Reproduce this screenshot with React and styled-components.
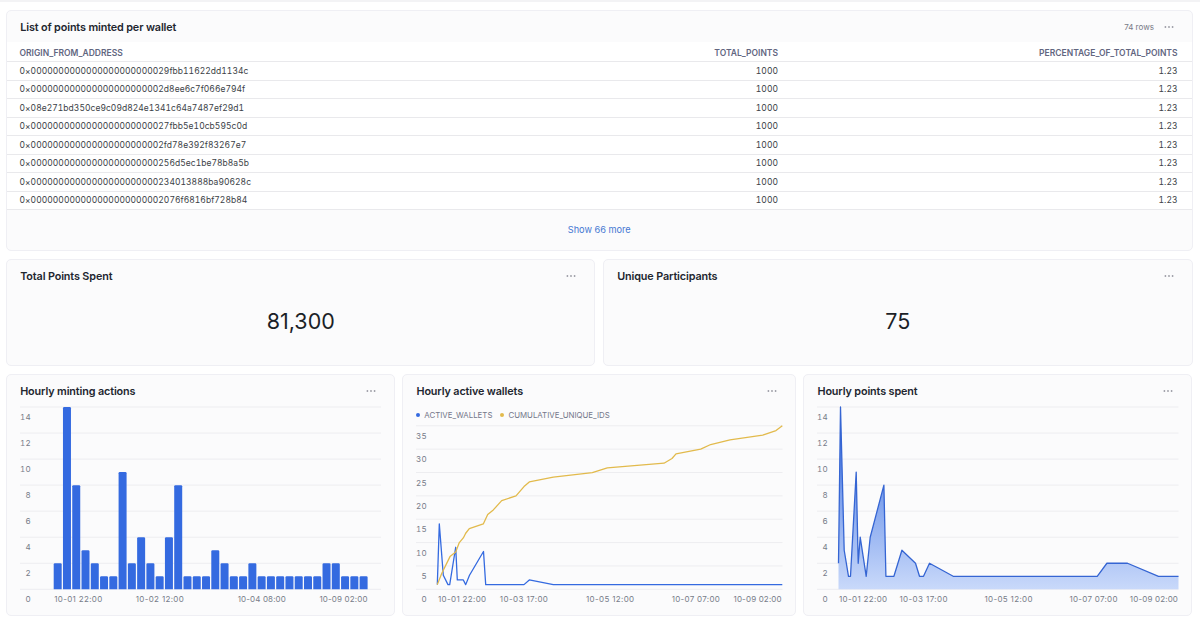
import styled, { createGlobalStyle } from 'styled-components';

const GlobalStyle = createGlobalStyle`
	* {
		box-sizing: border-box;
	}

	body {
		margin: 0;
		background: #fff;
		font-family: Inter, 'Liberation Sans', sans-serif;
		-webkit-font-smoothing: antialiased;
	}
`;

const BLUE = '#346ae0';
const YELLOW = '#e2ba4c';

const wallets = [
	'0×0000000000000000000000029fbb11622dd1134c',
	'0×000000000000000000000002d8ee6c7f066e794f',
	'0×08e271bd350ce9c09d824e1341c64a7487ef29d1',
	'0×0000000000000000000000027fbb5e10cb595c0d',
	'0×000000000000000000000002fd78e392f83267e7',
	'0×00000000000000000000000256d5ec1be78b8a5b',
	'0×00000000000000000000000234013888ba90628c',
	'0×000000000000000000000002076f6816bf728b84',
];

const mintingActions = [
	2, 14, 8, 3, 2, 1, 1, 9, 2, 4, 2, 1, 4, 8, 1, 1, 1, 3, 2, 1, 1, 2, 1, 1, 1, 1, 1, 1,
	1, 2, 2, 1, 1, 1,
];

// [x, value]
const activeWallets = [
	[34.3, 1], [36.3, 14], [40.3, 3], [45, 1], [46.7, 1], [52.7, 9], [54.3, 2],
	[60.3, 2], [62.7, 1], [66.5, 3], [80.5, 8.1], [82.7, 1], [121, 1], [126.3, 2],
	[150.3, 1], [379.3, 1],
];

const cumulativeIds = [
	[34.3, 1], [38.7, 3.4], [47, 7], [52.7, 8], [56.3, 10], [60.3, 11], [62.7, 12],
	[66.3, 13], [80.3, 14], [84.7, 16], [90.3, 17], [98.7, 19], [113, 20], [121, 22],
	[126.3, 23], [150.3, 24], [189.3, 25], [204.3, 26], [261, 27], [269, 28],
	[273, 29], [297.7, 30], [307.7, 31], [327, 32], [359.7, 33], [373, 34],
	[379.3, 35],
];

const pointsSpent = [
	[34.5, 2], [36.5, 14], [40.2, 3], [44.5, 1], [46.5, 1], [52.2, 9], [54.2, 2],
	[56.2, 4], [62.2, 1], [66.2, 4], [79.9, 8], [81.9, 1], [89.9, 1], [97.9, 3],
	[111.5, 2], [115.5, 1], [119.5, 1], [125.5, 2], [149.2, 1], [293.2, 1],
	[302.9, 2], [323.5, 2], [354.5, 1], [374.5, 1],
];

const Page = styled.main`
	display: flex;
	flex-direction: column;
	gap: 8px;
	width: 1200px;
	height: 625px;
	padding: 8px 7.5px 0 6px;
	border-top: 2px solid #f3f3f5;
	overflow: hidden;
`;

const Row = styled.div`
	display: grid;
	grid-template-columns: ${({ $columns }) => $columns};
	gap: 7.6px;
	height: ${({ $height }) => $height}px;
`;

const CardBox = styled.section`
	display: flex;
	flex-direction: column;
	min-width: 0;
	height: ${({ $height }) => ($height ? `${$height}px` : '100%')};
	border: 1px solid #efeff4;
	border-radius: 5px;
	background: #fbfbfc;
	overflow: hidden;
`;

const CardHeader = styled.header`
	display: flex;
	align-items: center;
	flex: none;
	height: ${({ $height }) => $height || 31}px;
	padding: 0 18px 0 13.2px;
`;

const Title = styled.h2`
	flex: 1;
	margin: 0;
	padding-top: ${({ $shift }) => $shift}px;
	color: #22262f;
	font-size: 10.8px;
	font-weight: 600;
	letter-spacing: -0.12px;
	line-height: 14px;
`;

const RowCount = styled.span`
	margin-right: 9.6px;
	color: #777986;
	font-size: 8px;
`;

const Dots = styled.svg`
	display: block;
	width: 10px;
	height: 4px;
	fill: #9b9ca5;
`;

const Table = styled.table`
	width: 100%;
	border-collapse: collapse;
	table-layout: fixed;
	background: #fff;
`;

const HeadCell = styled.th`
	width: ${({ $width }) => $width};
	height: 19.5px;
	padding: 2px 14px 0 12.5px;
	color: #62667f;
	font-size: 8.5px;
	font-weight: 600;
	text-align: ${({ $align }) => $align || 'left'};
	border-bottom: 1px solid #e9e9ec;
`;

const Cell = styled.td`
	height: 18.5px;
	padding: 0 14px 0 12.5px;
	color: #3c3f47;
	font-size: 8.5px;
	font-variant-numeric: tabular-nums;
	letter-spacing: 0.04px;
	text-align: ${({ $align }) => $align || 'left'};
	border-bottom: 1px solid #e9e9ec;
`;

const ShowMore = styled.button`
	flex: 1;
	border: 0;
	background: none;
	color: #4678d2;
	font-family: inherit;
	font-size: 9.2px;
`;

const BigNumber = styled.div`
	display: flex;
	justify-content: center;
	padding-top: 13px;
	color: #1c1f27;
	font-size: 21.5px;
	line-height: 30px;
`;

const Legend = styled.div`
	display: flex;
	gap: 8px;
	height: 15px;
	padding: 2px 0 0 13px;
`;

const LegendItem = styled.span`
	display: flex;
	align-items: center;
	gap: 4px;
	color: #74778a;
	font-size: 7.85px;
	line-height: 12px;

	&::before {
		content: '';
		width: 4px;
		height: 4px;
		border-radius: 50%;
		background: ${({ $color }) => $color};
	}
`;

const ChartSvg = styled.svg`
	display: block;
	flex: none;
	width: 100%;
	height: ${({ $height }) => $height}px;
`;

const TickText = styled.text`
	fill: #777b89;
	font-size: 8px;
	font-variant-numeric: tabular-nums;
	letter-spacing: 0.15px;
`;

const TimeText = styled.text`
	fill: #777b89;
	font-size: 8px;
	letter-spacing: 0.2px;
`;

const GridLine = styled.line`
	stroke: #ededf0;
	stroke-width: 1;
`;

const Series = styled.polyline`
	fill: none;
	stroke: ${({ $color }) => $color};
	stroke-width: 1.3;
	stroke-linejoin: round;
`;

const Card = ({ title, count, height, headerHeight, titleShift = 2, children }) => (
	<CardBox $height={height}>
		<CardHeader $height={headerHeight}>
			<Title $shift={titleShift}>{title}</Title>
			{count && <RowCount>{count}</RowCount>}
			<Dots viewBox="0 0 10 4">
				<circle cx="1.4" cy="2" r="0.9" />
				<circle cx="5" cy="2" r="0.9" />
				<circle cx="8.6" cy="2" r="0.9" />
			</Dots>
		</CardHeader>
		{children}
	</CardBox>
);

const toPoints = (data, base, unit) =>
	data.map(([x, value]) => `${x},${base - value * unit}`).join(' ');

const Chart = ({ height, base, top, ticks, left = 13, right, labels, children }) => {
	const step = (base - top) / (ticks.length - 1);

	return (
		<ChartSvg $height={height}>
			{ticks.map((tick, i) => (
				<g key={tick}>
					<GridLine x1={left} x2={right} y1={base - i * step} y2={base - i * step} />
					<TickText x={left + 10.8} y={base - i * step + 13} textAnchor="end">
						{tick}
					</TickText>
				</g>
			))}
			{children}
			{labels.map(([x, label]) => (
				<TimeText key={label} x={x} y={base + 13} textLength="48.3">
					{label}
				</TimeText>
			))}
		</ChartSvg>
	);
};

const evenTicks = [0, 2, 4, 6, 8, 10, 12, 14];
const fiveTicks = [0, 5, 10, 15, 20, 25, 30, 35];

const BarChart = () => (
	<Chart
		height={208}
		base={183.3}
		top={1}
		ticks={evenTicks}
		right={374}
		labels={[
			[47.2, '10-01 22:00'],
			[128.7, '10-02 12:00'],
			[230.7, '10-04 08:00'],
			[312.4, '10-09 02:00'],
		]}
	>
		{mintingActions.map((value, i) => (
			<path
				key={i}
				fill={BLUE}
				d={`M${46.7 + i * 9.27} 183.3v${-value * 13.02 + 1.2}q0-1.2 1.2-1.2h5.6q1.2 0 1.2 1.2V183.3z`}
			/>
		))}
	</Chart>
);

const LineChart = () => (
	<>
		<Legend>
			<LegendItem $color={BLUE}>ACTIVE_WALLETS</LegendItem>
			<LegendItem $color={YELLOW}>CUMULATIVE_UNIQUE_IDS</LegendItem>
		</Legend>
		<Chart
			height={193}
			base={168.3}
			top={4.8}
			ticks={fiveTicks}
			right={379.5}
			labels={[
				[35, '10-01 22:00'],
				[96.8, '10-03 17:00'],
				[183, '10-05 12:00'],
				[268.7, '10-07 07:00'],
				[330.5, '10-09 02:00'],
			]}
		>
			<Series $color={BLUE} points={toPoints(activeWallets, 168.3, 4.67)} />
			<Series $color={YELLOW} points={toPoints(cumulativeIds, 168.3, 4.67)} />
		</Chart>
	</>
);

const AreaChart = () => (
	<Chart
		height={208}
		base={183.3}
		top={1}
		ticks={evenTicks}
		right={374.5}
		labels={[
			[35, '10-01 22:00'],
			[95.4, '10-03 17:00'],
			[180.4, '10-05 12:00'],
			[265.4, '10-07 07:00'],
			[325.8, '10-09 02:00'],
		]}
	>
		<defs>
			<linearGradient id="area" x1="0" y1="0" x2="0" y2="1">
				<stop offset="0" stopColor="#346ae0" />
				<stop offset="1" stopColor="#c9d9fa" />
			</linearGradient>
		</defs>
		<polygon
			fill="url(#area)"
			points={`34.5,183.3 ${toPoints(pointsSpent, 183.3, 13.02)} 374.5,183.3`}
		/>
		<Series $color="#3565d3" points={toPoints(pointsSpent, 183.3, 13.02)} />
	</Chart>
);

const App = () => (
	<Page>
		<GlobalStyle />
		<Card title="List of points minted per wallet" count="74 rows" height={240.5}>
			<Table>
				<thead>
					<tr>
						<HeadCell $width="380px">ORIGIN_FROM_ADDRESS</HeadCell>
						<HeadCell $align="right">TOTAL_POINTS</HeadCell>
						<HeadCell $align="right" $width="399.5px">
							PERCENTAGE_OF_TOTAL_POINTS
						</HeadCell>
					</tr>
				</thead>
				<tbody>
					{wallets.map((wallet) => (
						<tr key={wallet}>
							<Cell>{wallet}</Cell>
							<Cell $align="right">1000</Cell>
							<Cell $align="right">1.23</Cell>
						</tr>
					))}
				</tbody>
			</Table>
			<ShowMore>Show 66 more</ShowMore>
		</Card>
		<Row $columns="1fr 1fr" $height={107.5}>
			<Card title="Total Points Spent" headerHeight={33} titleShift={1}>
				<BigNumber>81,300</BigNumber>
			</Card>
			<Card title="Unique Participants" headerHeight={33} titleShift={1}>
				<BigNumber>75</BigNumber>
			</Card>
		</Row>
		<Row $columns="388.7fr 393.4fr 389.2fr" $height={241.5}>
			<Card title="Hourly minting actions">
				<BarChart />
			</Card>
			<Card title="Hourly active wallets">
				<LineChart />
			</Card>
			<Card title="Hourly points spent">
				<AreaChart />
			</Card>
		</Row>
	</Page>
);

export default App;
